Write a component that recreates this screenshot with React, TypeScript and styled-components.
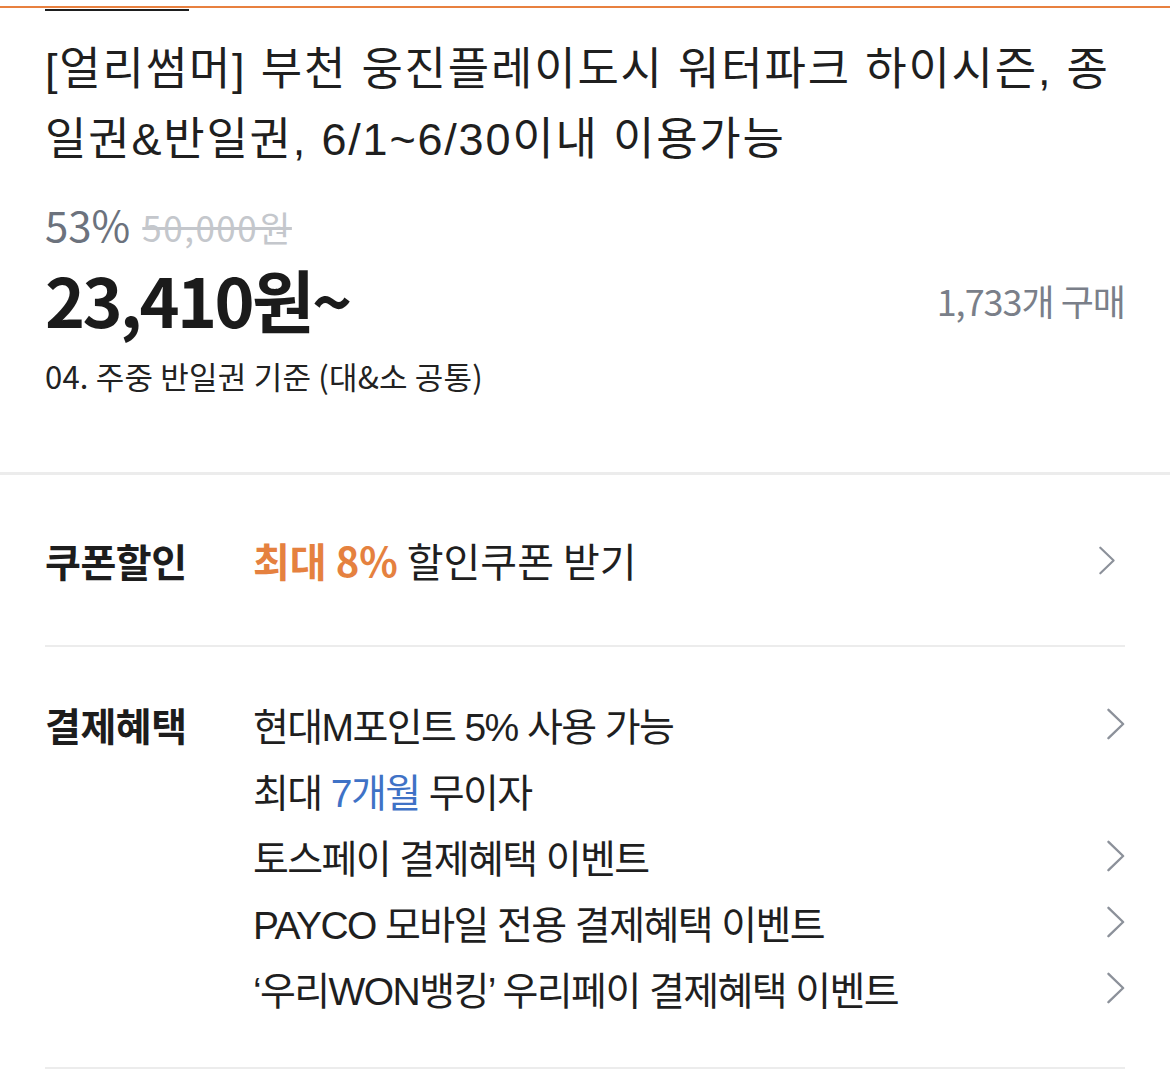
import styled, { createGlobalStyle } from "styled-components";

const GlobalStyle = createGlobalStyle`
  body {
    margin: 0;
    background: #fff;
    font-family: "Liberation Sans", "Noto Sans CJK KR", sans-serif;
    color: #1f1f1f;
  }
`;

const Page = styled.div`
  width: 1170px;
  background: #fff;
  padding-top: 6px;
`;

const TabLine = styled.div`
  height: 2px;
  background: #e8803f;
`;

const TabIndicator = styled.div`
  margin: 1px 0 0 45px;
  width: 144px;
  height: 2px;
  background: #1e1e1e;
`;

const Head = styled.div`
  padding: 24px 45px 0;
`;

const Title = styled.h1`
  margin: 0;
  font-weight: 400;
  font-size: 45px;
  line-height: 70px;
  letter-spacing: 1.8px;
  color: #1f1f1f;
`;

const DiscountRow = styled.div`
  display: flex;
  align-items: baseline;
  gap: 12px;
  margin-top: 18px;
  font-family: "Noto Sans CJK KR", sans-serif;
`;

const Rate = styled.span`
  font-size: 42px;
  color: #6c727d;
`;

const Original = styled.span`
  font-size: 35px;
  color: #c4c7cc;
  text-decoration: line-through;
  letter-spacing: 1.5px;
`;

const PriceRow = styled.div`
  display: flex;
  justify-content: space-between;
  align-items: center;
  height: 78px;
  margin-top: 5px;
  font-family: "Noto Sans CJK KR", sans-serif;
`;

const Price = styled.span`
  font-size: 68px;
  font-weight: 700;
  letter-spacing: -2.6px;
  color: #1b1b1b;
`;

const Sold = styled.span`
  font-size: 36px;
  color: #7a7f89;
  letter-spacing: -1px;
  margin-top: 4px;
`;

const Option = styled.div`
  margin-top: 19px;
  font-family: "Noto Sans CJK KR", sans-serif;
  font-size: 31px;
  letter-spacing: 0.2px;
  color: #222;
  line-height: 40px;
  padding-bottom: 76px;
`;

const Divider = styled.div`
  height: 3px;
  background: #ececec;
`;

const Section = styled.div`
  padding: 0 45px;
`;

const CouponRow = styled.div`
  display: grid;
  grid-template-columns: 208px 1fr auto;
  align-items: center;
  height: 170px;
`;

const Label = styled.div`
  font-family: "Noto Sans CJK KR", sans-serif;
  font-weight: 700;
  font-size: 39px;
  letter-spacing: -0.5px;
  color: #1d1d1d;
`;

const CouponText = styled.div`
  font-family: "Noto Sans CJK KR", sans-serif;
  font-size: 40px;
  color: #1f1f1f;
`;

const Accent = styled.span`
  color: #e5813f;
  font-weight: 700;
`;

const Rule = styled.div`
  height: 2px;
  background: #ececec;
`;

const Benefits = styled.div`
  display: grid;
  grid-template-columns: 208px 1fr;
  padding: 44px 0 46px;
`;

const BenefitLabel = styled(Label)`
  height: 66px;
  display: flex;
  align-items: center;
`;

const BenefitList = styled.div`
  display: flex;
  flex-direction: column;
`;

const BenefitItem = styled.div`
  display: flex;
  justify-content: space-between;
  align-items: center;
  height: 66px;
  font-size: 39px;
  letter-spacing: -1.6px;
  color: #1f1f1f;
`;

const Blue = styled.span`
  color: #3f72c6;
`;

const Arrow = styled.svg<{ $inset?: number }>`
  flex: none;
  margin-right: ${(p) => p.$inset ?? 0}px;
`;

const Chevron = ({ size = 32, inset = 0 }: { size?: number; inset?: number }) => (
  <Arrow
    $inset={inset}
    width={size * 0.55}
    height={size}
    viewBox="0 0 18 32"
    fill="none"
    stroke="#8c919a"
    strokeWidth={2.4}
    strokeLinecap="round"
    strokeLinejoin="round"
  >
    <path d="M1.5 1.5 L16.5 16 L1.5 30.5" />
  </Arrow>
);

const benefits: { text: React.ReactNode; link: boolean }[] = [
  { text: "현대M포인트 5% 사용 가능", link: true },
  {
    text: (
      <>
        최대 <Blue>7개월</Blue> 무이자
      </>
    ),
    link: false,
  },
  { text: "토스페이 결제혜택 이벤트", link: true },
  { text: "PAYCO 모바일 전용 결제혜택 이벤트", link: true },
  { text: "‘우리WON뱅킹’ 우리페이 결제혜택 이벤트", link: true },
];

const App = () => (
  <Page>
    <GlobalStyle />
    <TabLine />
    <TabIndicator />
    <Head>
      <Title>[얼리썸머] 부천 웅진플레이도시 워터파크 하이시즌, 종일권&amp;반일권, 6/1~6/30이내 이용가능</Title>
      <DiscountRow>
        <Rate>53%</Rate>
        <Original>50,000원</Original>
      </DiscountRow>
      <PriceRow>
        <Price>23,410원~</Price>
        <Sold>1,733개 구매</Sold>
      </PriceRow>
      <Option>04. 주중 반일권 기준 (대&amp;소 공통)</Option>
    </Head>
    <Divider />
    <Section>
      <CouponRow>
        <Label>쿠폰할인</Label>
        <CouponText>
          <Accent>최대 8%</Accent> 할인쿠폰 받기
        </CouponText>
        <Chevron size={29} inset={10} />
      </CouponRow>
      <Rule />
      <Benefits>
        <BenefitLabel>결제혜택</BenefitLabel>
        <BenefitList>
          {benefits.map((b, i) => (
            <BenefitItem key={i}>
              <span>{b.text}</span>
              {b.link && <Chevron />}
            </BenefitItem>
          ))}
        </BenefitList>
      </Benefits>
      <Rule />
    </Section>
  </Page>
);

export default App;
